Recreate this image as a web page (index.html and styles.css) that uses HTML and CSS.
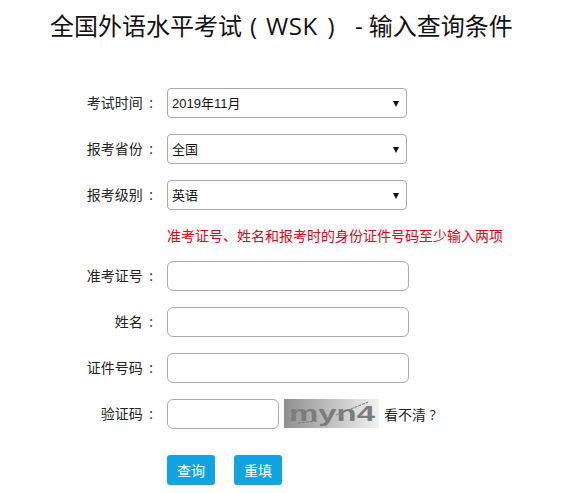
FILE: index.html
```html
<!DOCTYPE html>
<html lang="zh-CN">
<head>
  <meta charset="UTF-8">
  <meta name="viewport" content="width=device-width, initial-scale=1.0">
  <link rel="stylesheet" href="styles.css">
  <title>全国外语水平考试（WSK） - 输入查询条件</title>
</head>
<body>

  <h1 class="page-title">全国外语水平考试<span class="paren-open">(</span><span class="exam-code">WSK</span><span class="paren-close">)</span> - 输入查询条件</h1>

  <form class="query-form">
    <div class="form-row">
      <label class="form-label">考试时间 :</label>
      <select class="form-select"><option>2019年11月</option></select>
    </div>
    <div class="form-row">
      <label class="form-label">报考省份 :</label>
      <select class="form-select"><option>全国</option></select>
    </div>
    <div class="form-row">
      <label class="form-label">报考级别 :</label>
      <select class="form-select"><option>英语</option></select>
    </div>

    <p class="form-hint">准考证号、姓名和报考时的身份证件号码至少输入两项</p>

    <div class="form-row">
      <label class="form-label">准考证号 :</label>
      <input class="form-input" type="text">
    </div>
    <div class="form-row">
      <label class="form-label">姓名 :</label>
      <input class="form-input" type="text">
    </div>
    <div class="form-row">
      <label class="form-label">证件号码 :</label>
      <input class="form-input" type="text">
    </div>
    <div class="form-row">
      <label class="form-label">验证码 :</label>
      <input class="form-input captcha-input" type="text">
      <svg class="captcha" width="95" height="29" viewBox="0 0 95 29">
        <defs>
          <linearGradient id="captcha-bg" x1="0" y1="0" x2="1" y2="0">
            <stop offset="0" stop-color="#8f8f8f"/>
            <stop offset="1" stop-color="#f2f2f2"/>
          </linearGradient>
        </defs>
        <rect width="95" height="29" fill="url(#captcha-bg)"/>
        <path d="M14 24 L34 22 M52 16 L84 3" stroke="#777" stroke-width="1" stroke-dasharray="3 1" fill="none"/>
        <text class="captcha-text" x="5" y="22" textLength="86" lengthAdjust="spacingAndGlyphs">myn4</text>
      </svg>
      <span class="captcha-refresh">看不清 ?</span>
    </div>

    <div class="form-actions">
      <button class="btn" type="button">查询</button>
      <button class="btn" type="button">重填</button>
    </div>
  </form>

</body>
</html>
```

FILE: styles.css
```css
body {
  font-family: "Open Sans", "Noto Sans CJK SC", sans-serif;
  font-size: 14px;
  color: #222;
  background-color: #fff;
  margin: 0;
  padding: 0;
}

.page-title {
  font-size: 24px;
  font-weight: normal;
  line-height: 32px;
  color: #111;
  margin: 0;
  padding: 10px 0 0 50px;
  white-space: nowrap;
}

.paren-open {
  margin-left: 8px;
  margin-right: 9px;
}

.exam-code {
  letter-spacing: 0.5px;
}

.paren-close {
  margin-left: 10px;
  margin-right: 14px;
}

.query-form {
  padding-top: 46px;
}

.form-row {
  display: flex;
  align-items: center;
  height: 30px;
  margin-bottom: 16px;
}

.form-label {
  width: 167px;
  padding-right: 14px;
  box-sizing: border-box;
  text-align: right;
  word-spacing: 3px;
  white-space: nowrap;
  margin-top: -2px;
}

.form-select {
  width: 240px;
  height: 30px;
  padding: 0 0 0 4px;
  font-family: "Liberation Sans", "Noto Sans CJK SC", sans-serif;
  font-size: 13px;
  color: #111;
  background-color: #fff;
  background-image: url("data:image/svg+xml,%3Csvg xmlns='http://www.w3.org/2000/svg' width='6' height='6'%3E%3Cpath d='M0 0H6L3 6Z' fill='%23111'/%3E%3C/svg%3E");
  background-repeat: no-repeat;
  background-position: right 7px top 12px;
  border: 1px solid #aaa;
  border-radius: 4px;
  appearance: none;
}

.form-hint {
  height: 37px;
  margin: -2px 0 0 167px;
  font-size: 14px;
  line-height: 24px;
  color: #e60012;
  white-space: nowrap;
}

.form-input {
  width: 242px;
  height: 30px;
  padding: 0 6px;
  box-sizing: border-box;
  background-color: #fff;
  border: 1px solid #aaa;
  border-radius: 6px;
}

.captcha-input {
  width: 112px;
}

.captcha {
  margin-left: 5px;
  margin-top: -1px;
}

.captcha-text {
  font-family: "Liberation Sans", sans-serif;
  font-size: 22px;
  font-weight: bold;
  fill: #7c7c7c;
}

.captcha-refresh {
  margin-left: 5px;
  white-space: nowrap;
}

.form-actions {
  display: flex;
  gap: 19px;
  padding: 10px 0 0 167px;
}

.btn {
  width: 48px;
  height: 30px;
  padding: 0;
  font: inherit;
  color: #fff;
  background-color: #12a3e3;
  border: none;
  border-radius: 3px;
}
```
